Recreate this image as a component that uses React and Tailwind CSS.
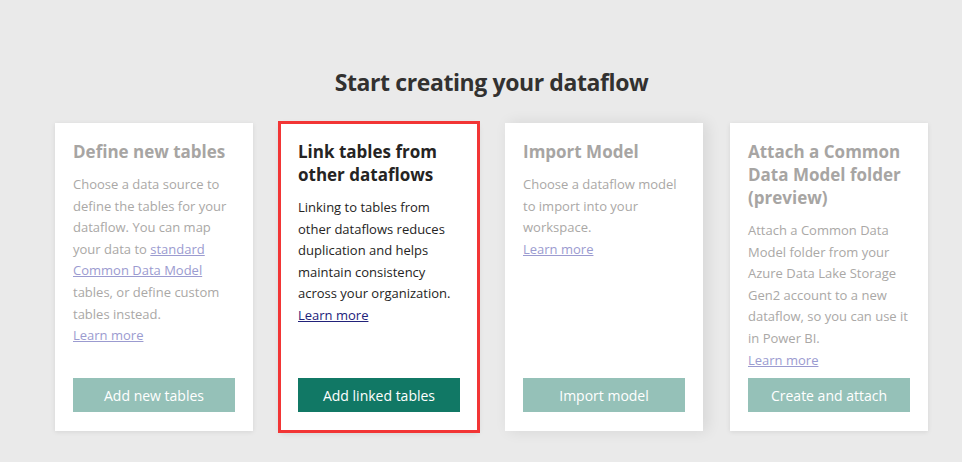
import React from 'react'

const cards = [
  {
    title: 'Define new tables',
    body: (
      <>
        Choose a data source to define the tables for your dataflow. You can map your data to{' '}
        <span className='underline'>standard Common Data Model</span> tables, or define custom tables instead.
      </>
    ),
    button: 'Add new tables',
  },
  {
    title: 'Link tables from other dataflows',
    body: 'Linking to tables from other dataflows reduces duplication and helps maintain consistency across your organization.',
    button: 'Add linked tables',
    active: true,
  },
  {
    title: 'Import Model',
    body: 'Choose a dataflow model to import into your workspace.',
    button: 'Import model',
    wide: true,
  },
  {
    title: 'Attach a Common Data Model folder (preview)',
    body: 'Attach a Common Data Model folder from your Azure Data Lake Storage Gen2 account to a new dataflow, so you can use it in Power BI.',
    button: 'Create and attach',
  },
]

const Card = ({ card }) => {
  const { title, body, button, active, wide } = card
  return (
    <div
      className={
        'w-[198px] h-[308px] bg-white flex flex-col pt-[17px] pb-[19px] px-[18px] ' +
        (active
          ? 'outline-[3px] outline-solid outline-[#f23535] outline-offset-[-1px] shadow-[0_2px_6px_rgba(0,0,0,0.12)]'
          : wide
          ? 'shadow-[4px_0_14px_rgba(0,0,0,0.09)]'
          : 'shadow-[0_1px_5px_rgba(0,0,0,0.09)]')
      }
    >
      <h2
        className={
          'text-[17px] leading-[23px] font-bold ' + (active ? 'text-[#252423]' : 'text-[#a7a5a3]')
        }
      >
        {title}
      </h2>
      <p
        className={
          'mt-[11px] text-[13px] leading-[21.6px] ' + (active ? 'text-[#252423]' : 'text-[#aaa8a6] [&_span]:text-[#9b9bd0]')
        }
      >
        {body}
      </p>
      <a
        className={'text-[13px] leading-[21.6px] underline self-start ' + (active ? 'text-[#22227a]' : 'text-[#9b9bd0]')}
      >
        Learn more
      </a>
      <div className='flex-1' />
      <button
        className={
          'w-[162px] h-[34px] text-[14px] text-white ' + (active ? 'bg-[#117865]' : 'bg-[#95c1b8]')
        }
      >
        {button}
      </button>
    </div>
  )
}

const App = () => {
  return (
    <div
      className='w-[962px] h-[462px] bg-[#eaeaea] overflow-hidden'
      style={{ fontFamily: '"Open Sans", "Noto Sans", sans-serif' }}
    >
      <div className='w-[873px] ml-[55px] pt-[66px]'>
        <h1 className='text-center text-[23px] leading-[32px] font-bold text-[#323130] tracking-[-0.4px]'>
          Start creating your dataflow
        </h1>
        <div className='mt-[25px] flex gap-[27px]'>
          {cards.map((c) => (
            <Card key={c.button} card={c} />
          ))}
        </div>
      </div>
    </div>
  )
}

export default App
